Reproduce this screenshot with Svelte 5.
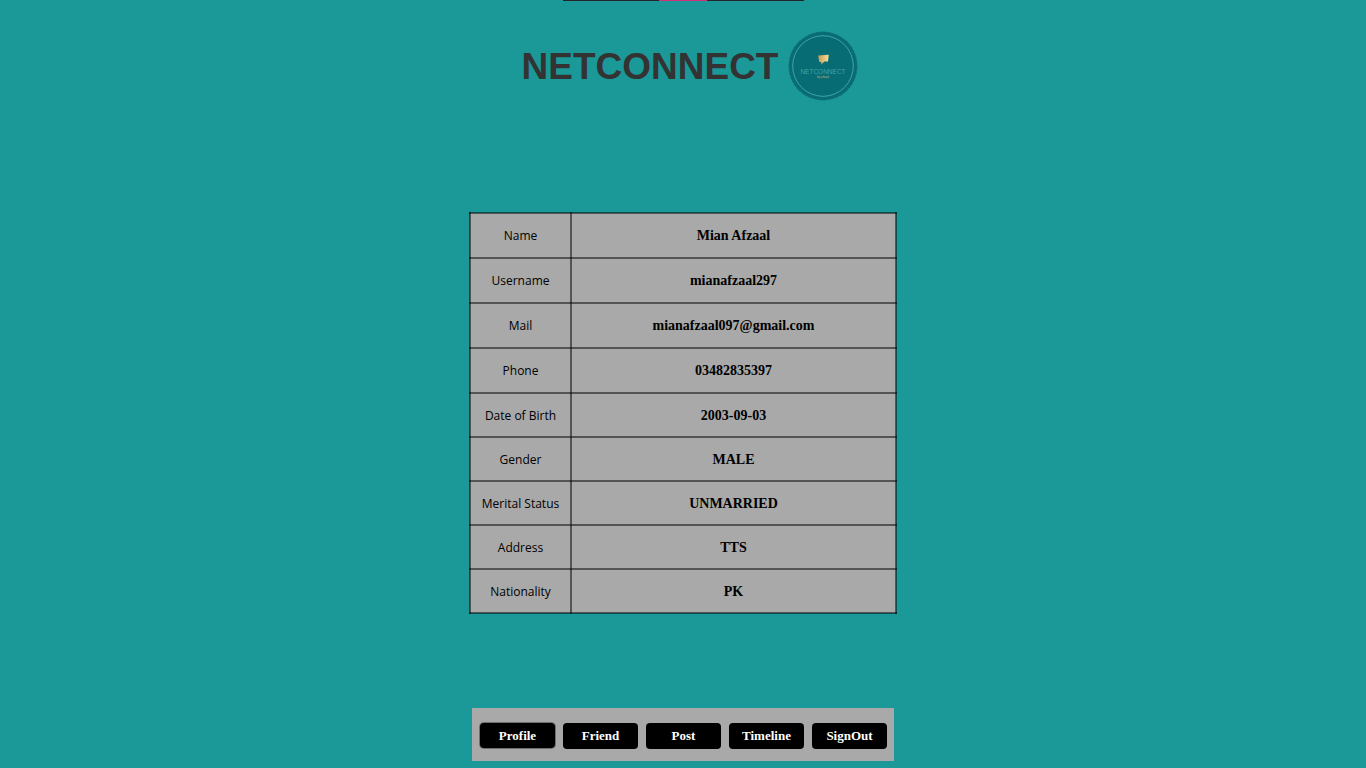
<script>
  const rows = [
    ['Name', 'Mian Afzaal'],
    ['Username', 'mianafzaal297'],
    ['Mail', 'mianafzaal097@gmail.com'],
    ['Phone', '03482835397'],
    ['Date of Birth', '2003-09-03'],
    ['Gender', 'MALE'],
    ['Merital Status', 'UNMARRIED'],
    ['Address', 'TTS'],
    ['Nationality', 'PK']
  ];
  const actions = ['Profile', 'Friend', 'Post', 'Timeline', 'SignOut'];
  let active = $state('Profile');
</script>

<div class="page">
  <div class="strip"><span></span></div>

  <header>
    <h1>NETCONNECT</h1>
    <svg class="logo" viewBox="0 0 70 70" role="img" aria-label="Netconnect logo">
      <defs>
        <linearGradient id="gold" x1="0" x2="1" y1="0" y2="0">
          <stop offset="0" stop-color="#c69a55" />
          <stop offset="1" stop-color="#f6e29a" />
        </linearGradient>
      </defs>
      <circle cx="35" cy="35" r="34.5" fill="#086c74" />
      <circle cx="35" cy="35" r="34.2" fill="none" stroke="#2a8b90" stroke-width=".6" stroke-dasharray="2 2" />
      <circle cx="35" cy="35" r="30.3" fill="none" stroke="#41a3a6" stroke-width="1" />
      <path d="M30.2 24.4 40.7 23.8 40 30.6H36.4L33.4 33.4V31.2L31.2 30.8Z" fill="url(#gold)" />
      <text x="35" y="42.7" class="brand">NETCONNECT</text>
      <text x="35" y="47.2" class="tag">by afzaal</text>
    </svg>
  </header>

  <main>
    <table>
      <tbody>
        {#each rows as [label, value]}
          <tr>
            <th scope="row">{label}</th>
            <td>{value}</td>
          </tr>
        {/each}
      </tbody>
    </table>
  </main>

  <nav>
    {#each actions as name}
      <button type="button" class:active={active === name} onclick={() => (active = name)}>{name}</button>
    {/each}
  </nav>
</div>

<style>
  :global(body) {
    margin: 0;
    background: #1b9998;
  }
  .page {
    display: flex;
    flex-direction: column;
    align-items: center;
    box-sizing: border-box;
    min-height: 100vh;
    padding-bottom: 7px;
  }
  .strip {
    display: flex;
    justify-content: center;
    width: 241px;
    height: 1px;
    background: #242428;
  }
  .strip span {
    width: 48px;
    background: #d4307c;
  }
  header {
    display: flex;
    align-items: center;
    gap: 10px;
    margin-top: 30px;
    padding-left: 14px;
  }
  h1 {
    margin: 0;
    padding-top: 2px;
    color: #333;
    font: 700 37px/40px Broadway, "Liberation Sans", Arial, sans-serif;
  }
  .logo {
    display: block;
    width: 70px;
    height: 70px;
  }
  .brand,
  .tag {
    font-family: "Liberation Sans", Arial, sans-serif;
    text-anchor: middle;
  }
  .brand {
    fill: #41a3a6;
    font-size: 6.5px;
  }
  .tag {
    fill: #b8ad78;
    font-size: 3px;
  }
  main {
    margin: auto 0;
    padding-top: 16px;
  }
  table {
    width: 428px;
    border-collapse: collapse;
    color: #000;
    text-align: center;
  }
  th,
  td {
    box-sizing: border-box;
    height: 44px;
    padding: 2px 0 0;
    border: 2px solid rgb(0 0 0 / 50%);
    background: #a9a9a9;
  }
  tr:nth-child(-n + 4) > * {
    height: 45px;
  }
  th {
    width: 101px;
    font: 400 12px/16px "Segoe UI", "Open Sans", "Noto Sans", sans-serif;
  }
  td {
    font: 700 14px/16px "Baskerville Old Face", "Liberation Serif", "Times New Roman", serif;
  }
  nav {
    display: flex;
    gap: 8px;
    padding: 15px 7px 12px 8px;
    background: #a9a9a9;
  }
  button {
    width: 75px;
    height: 26px;
    padding: 0;
    border: 0;
    border-radius: 4px;
    background: #000;
    color: #fff;
    font: 700 13px/16px "Baskerville Old Face", "Liberation Serif", "Times New Roman", serif;
    cursor: pointer;
  }
  button.active {
    height: 25px;
    box-shadow: 0 0 0 1px rgb(0 0 0 / 35%);
  }
</style>
